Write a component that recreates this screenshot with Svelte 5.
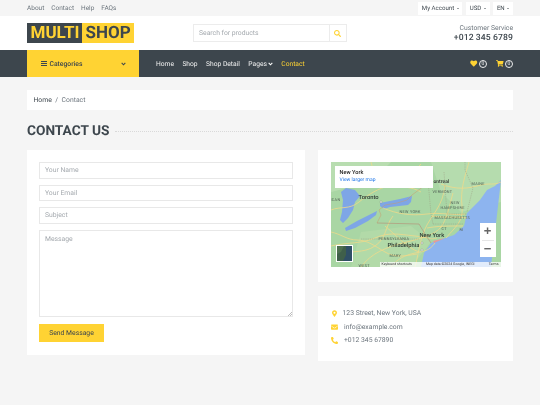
<script>
  const topLinks = ['About', 'Contact', 'Help', 'FAQs'];
  const dropdowns = ['My Account', 'USD', 'EN'];
  const navLinks = ['Home', 'Shop', 'Shop Detail'];
  const mapLabels = [
    { t: 'Toronto', x: 28, y: 33, c: 'big' },
    { t: 'New York', x: 89, y: 71, c: 'big' },
    { t: 'Philadelphia', x: 57, y: 81, c: 'big' },
    { t: 'ontreal', x: 103, y: 17, c: 'mid' },
    { t: 'ICAN', x: 0, y: 36, c: 'sm' },
    { t: 'NEW YORK', x: 69, y: 48, c: 'sm' },
    { t: 'VERMONT', x: 102, y: 28, c: 'sm' },
    { t: 'MAINE', x: 141, y: 20, c: 'sm' },
    { t: 'NEW', x: 120, y: 39, c: 'sm' },
    { t: 'HAMPSHIRE', x: 110, y: 43.500, c: 'sm' },
    { t: 'MASSACHUSETTS', x: 104, y: 54, c: 'sm' },
    { t: 'CT', x: 111, y: 65, c: 'sm' },
    { t: 'RI', x: 129, y: 66, c: 'sm' },
    { t: 'PENNSYLVANIA', x: 48, y: 75, c: 'sm' },
    { t: 'MARY', x: 59, y: 92, c: 'sm' },
    { t: 'WEST', x: 28, y: 102, c: 'sm' }
  ];
</script>

<div class="page">
  <div class="topbar">
    <div class="toplinks">
      {#each topLinks as l}<span>{l}</span>{/each}
    </div>
    <div class="drops">
      {#each dropdowns as d}<span class="drop">{d}<i class="caret"></i></span>{/each}
    </div>
  </div>

  <div class="header">
    <div class="logo"><span class="l1">MULTI</span><span class="l2">SHOP</span></div>
    <div class="search">
      <span class="ph">Search for products</span>
      <span class="sbtn">
        <svg width="7" height="7" viewBox="0 0 512 512"><path fill="#FFD333" d="M505 442.700 405.300 343c-4.500-4.500-10.600-7-17-7H372c27.600-35.300 44-79.700 44-128C416 93.100 322.900 0 208 0S0 93.100 0 208s93.100 208 208 208c48.300 0 92.700-16.400 128-44v16.300c0 6.400 2.500 12.500 7 17l99.700 99.700c9.400 9.400 24.600 9.400 33.900 0l28.300-28.300c9.400-9.400 9.400-24.600.1-34zM208 336c-70.700 0-128-57.200-128-128 0-70.700 57.200-128 128-128 70.700 0 128 57.200 128 128 0 70.700-57.200 128-128 128z"/></svg>
      </span>
    </div>
    <div class="service">
      <div class="cs">Customer Service</div>
      <div class="phone">+012 345 6789</div>
    </div>
  </div>

  <div class="nav">
    <div class="cat">
      <svg class="bars" width="6" height="5" viewBox="0 0 6 5"><path fill="#3D464D" d="M0 0h6v.9H0zM0 2.050h6v.9H0zM0 4.100h6V5H0z"/></svg>
      <span>Categories</span>
      <svg class="chev" width="5" height="4" viewBox="0 0 6 5"><path fill="none" stroke="#3D464D" stroke-width="1.400" d="M.7 1.200 3 3.500l2.300-2.300"/></svg>
    </div>
    <div class="links">
      {#each navLinks as l}<span>{l}</span>{/each}
      <span class="pages">Pages<svg width="5" height="4" viewBox="0 0 6 5"><path fill="none" stroke="#fff" stroke-width="1.400" d="M.7 1.200 3 3.500l2.300-2.300"/></svg></span>
      <span class="active">Contact</span>
    </div>
    <div class="icons">
      <span class="ic">
        <svg width="7.500" height="7" viewBox="0 0 512 512"><path fill="#FFD333" d="M462.300 62.600C407.500 15.900 326 24.300 275.700 76.200L256 96.500l-19.700-20.300C186.100 24.300 104.500 15.900 49.700 62.600c-62.800 53.600-66.100 149.800-9.900 207.900l193.500 199.800c12.500 12.900 32.800 12.900 45.300 0l193.500-199.800c56.300-58.100 53-154.300-9.800-207.900z"/></svg>
        <b>0</b>
      </span>
      <span class="ic">
        <svg width="7.500" height="7" viewBox="0 0 576 512"><path fill="#FFD333" d="M528.100 301.300l47.300-208C578.800 78.300 567.400 64 552 64H159.200l-9.200-44.800C147.800 8 137.900 0 126.500 0H24C10.700 0 0 10.700 0 24v16c0 13.300 10.700 24 24 24h69.900l70.200 343.400C147.300 417.100 136 435.200 136 456c0 30.900 25.100 56 56 56s56-25.100 56-56c0-15.700-6.400-29.800-16.800-40h209.600C430.400 426.200 424 440.300 424 456c0 30.900 25.100 56 56 56s56-25.100 56-56c0-22.200-12.900-41.300-31.600-50.400l5.500-24.300c3.400-15-8-29.300-23.400-29.300H218.100l-6.500-32h293.100c11.200 0 20.900-7.800 23.400-18.700z"/></svg>
        <b>0</b>
      </span>
    </div>
  </div>

  <main class="main">
    <div class="crumb"><span class="home">Home</span><span class="sep">/</span><span>Contact</span></div>

    <div class="title"><h2>CONTACT US</h2><span class="dots"></span></div>

    <div class="cols">
      <form class="card form">
        <div class="input">Your Name</div>
        <div class="input">Your Email</div>
        <div class="input">Subject</div>
        <div class="input area">Message
          <svg class="grip" width="4" height="4" viewBox="0 0 5 5"><path stroke="#888" stroke-width=".7" d="M0 5 5 0M2.500 5 5 2.500"/></svg>
        </div>
        <div class="send">Send Message</div>
      </form>

      <div class="side">
        <div class="card mapcard">
          <div class="map">
            <svg class="mapsvg" width="170" height="105" viewBox="0 0 170 105">
              <rect width="170" height="105" fill="#A9D6A4"/>
              <path d="M0 0h60L40 20 0 30z" fill="#B8DDB0"/>
              <path d="M100 0h70v40l-40 10-20-20z" fill="#B5DCAE"/>
              <path d="M30 70l50-6 20 16-20 25H20z" fill="#B2DAA8"/>
              <path d="M170 18l-6 6-8 4-7 10-13 13-3 13-10 9-23 8-7 10-3 14h70z" fill="#8DB4EF"/>
              <path d="M15 26l9 2 5 6-5 6-2 8-5 8-5 5-3-3 2-8 1-12-2-8z" fill="#7EA6E6"/>
              <path d="M14 66l12-7 10-5 10-5-1 4-8 6-13 7-9 3z" fill="#7EA6E6"/>
              <path d="M49 41l10-2 10-2 12-3-1 6-3 3-9 1-9 1-6 2-4-3z" fill="#7EA6E6"/>
              <g fill="none" stroke="#EFD98A" stroke-width=".8">
                <path d="M0 84c18-4 30-2 44-8s22-4 40-2 14 4 22 2"/>
                <path d="M0 70c10 2 16 8 26 8s18 6 28 12 20 4 32 2"/>
                <path d="M30 105c10-14 26-20 42-24s32-8 38-16 8-20 12-34"/>
                <path d="M52 46c14 6 28 8 44 6s26 2 38 0"/>
                <path d="M84 105c3-10 4-24 10-38s18-22 20-44"/>
                <path d="M138 0c-4 14-9 28-7 44s-8 22-16 32"/>
                <path d="M54 64c10 8 22 22 34 26"/>
                <path d="M8 92c12-4 24 0 36-8s10-20 18-30"/>
                <path d="M110 22c10 4 22 6 36 2s16 0 24-4"/>
                <path d="M100 54c12 2 24 0 36 2M96 66c10-2 22-2 36-2"/>
                <path d="M0 48c10-4 18 0 28-8s20-14 30-16 22-10 32-22"/>
                <path d="M60 105c6-8 14-12 24-14s14-2 20-10"/>
                <path d="M40 0c2 10 10 18 20 22s20 2 30 8"/>
              </g>
              <path d="M46 61l4-8-2-5 6-5 12-2 10-3 5-5 8-6 8-6" fill="none" stroke="#C99A6A" stroke-width=".5"/>
              <path d="M46 61l42 1 6 10 6 9" fill="none" stroke="#B87C6A" stroke-width=".5"/>
              <path d="M30 77h58M96 8l4 44 2 10M102 62h30M113 10l3 42M116 52h20M134 0v8l8 18-6 24" fill="none" stroke="#98907A" stroke-width=".4" stroke-dasharray="1.300 .9"/>
              <path d="M102 79l12-3 8-4-10 5-9 4z" fill="#E59A9A"/>
              <circle cx="50" cy="40" r="1" fill="#fff" stroke="#777" stroke-width=".4"/>
              <circle cx="91" cy="81" r="1" fill="#fff" stroke="#777" stroke-width=".4"/>
              <circle cx="91" cy="88" r="1" fill="#fff" stroke="#777" stroke-width=".4"/>
            </svg>
            {#each mapLabels as l}
              <span class="lbl {l.c}" style="left:{l.x}px;top:{l.y}px">{l.t}</span>
            {/each}

            <div class="info">
              <div class="ny">New York</div>
              <div class="vl">View larger map</div>
            </div>
            <div class="zoom"><span class="plus">+</span><i></i><span class="minus">−</span></div>
            <div class="thumb">
              <svg width="15" height="15" viewBox="0 0 15 15"><rect width="15" height="15" fill="#3F5F4A"/><path d="M9 0h6v15H6l3-6z" fill="#2F4F66"/><path d="M0 0h7L4 6 0 8z" fill="#4E7050"/></svg>
            </div>
            <div class="attr"><span>Keyboard shortcuts</span><span>Map data ©2024 Google, INEGI</span><span>Terms</span></div>
          </div>
        </div>

        <div class="card infocard">
          <div class="row">
            <svg class="pin" viewBox="0 0 384 512"><path fill="#FFD333" d="M172.300 501.700C27 291 0 256 0 192 0 86 86 0 192 0s192 86 192 192c0 64-27 99-172.300 309.700-9.500 13.800-29.900 13.800-39.400 0zM192 272a80 80 0 1 0 0-160 80 80 0 0 0 0 160z"/></svg>
            <span class="t1">123 Street, New York, USA</span>
          </div>
          <div class="row">
            <svg class="env" viewBox="0 0 512 384"><path fill="#FFD333" d="M502.300 126.800c3.900-3.100 9.700-.2 9.700 4.700V336c0 26.500-21.500 48-48 48H48c-26.500 0-48-21.500-48-48V131.600c0-5 5.700-7.800 9.700-4.700 22.400 17.400 52.100 39.500 154.100 113.600 21.100 15.400 56.700 47.800 92.200 47.600 35.700.3 72-32.800 92.300-47.600 102-74.100 131.600-96.300 154-113.700zM256 256c23.200.4 56.600-29.200 73.400-41.400 132.700-96.300 142.800-104.700 173.400-128.700 5.800-4.500 9.200-11.500 9.200-18.900V48c0-26.500-21.500-48-48-48H48C21.500 0 0 21.500 0 48v19c0 7.400 3.400 14.300 9.200 18.900 30.600 23.900 40.700 32.400 173.400 128.700 16.800 12.200 50.200 41.800 73.400 41.400z"/></svg>
            <span class="t2">info@example.com</span>
          </div>
          <div class="row">
            <svg class="ph-ic" viewBox="0 0 512 512"><path fill="#FFD333" d="M493.400 24.600l-104-24c-11.300-2.600-22.900 3.300-27.500 13.900l-48 112c-4.200 9.800-1.400 21.300 6.900 28l60.600 49.600c-36 76.700-98.900 140.500-177.200 177.200l-49.600-60.600c-6.800-8.300-18.200-11.100-28-6.900l-112 48C3.900 366.500-2 378.100.6 389.400l24 104C27.100 504.200 36.700 512 48 512c256.100 0 464-207.500 464-464 0-11.200-7.700-20.900-18.600-23.400z" transform="matrix(-1 0 0 1 512 0)"/></svg>
            <span class="t2">+012 345 67890</span>
          </div>
        </div>
      </div>
    </div>
  </main>
</div>

<style>
  :global(body) { margin: 0; background: #f5f5f5; }
  .page { width: 540px; height: 405px; overflow: hidden; background: #f5f5f5; font-family: Roboto, sans-serif; font-size: 6.800px; color: #6c757d; text-rendering: geometricPrecision; filter: blur(.25px); }

  .topbar { height: 16px; padding: 0 27px; display: flex; justify-content: space-between; align-items: center; }
  .toplinks { display: flex; gap: 7px; color: #6c757d; font-size: 6.500px; }
  .drops { display: flex; gap: 3.500px; }
  .drop { background: #fff; height: 13px; padding: 0 3.800px; display: flex; align-items: center; gap: 1.500px; color: #3d464d; font-size: 6.100px; }
  .caret { width: 0; height: 0; border: 1.500px solid transparent; border-top-color: #3d464d; border-bottom: 0; margin-left: 1px; }

  .header { height: 34px; background: #fff; padding: 0 27px; display: grid; grid-template-columns: 166px 1fr auto; align-items: center; }
  .logo { display: flex; height: 20px; width: 107px; font-size: 17px; line-height: 20px; font-weight: 700; }
  .l1 { background: #3d464d; color: #ffd333; padding-left: 3.500px; width: 55px; box-sizing: border-box; }
  .l2 { background: #ffd333; color: #3d464d; padding-left: 3.500px; width: 52px; box-sizing: border-box; }
  .search { width: 154px; height: 17.500px; box-sizing: border-box; border: 1px solid #ececec; display: flex; align-items: center; justify-content: space-between; }
  .ph { padding-left: 5px; color: #a4a9ae; }
  .sbtn { width: 16.500px; height: 100%; display: flex; align-items: center; justify-content: center; border-left: 1px solid #ececec; }
  .service { text-align: right; }
  .cs { font-size: 6.800px; color: #6c757d; line-height: 10px; }
  .phone { font-size: 8.600px; font-weight: 500; color: #3d464d; line-height: 10px; letter-spacing: .1px; }

  .nav { height: 27px; background: #3d464d; padding: 0 27px; display: flex; align-items: stretch; }
  .cat { width: 112px; box-sizing: border-box; background: #ffd333; padding: 0 13.500px; display: flex; align-items: center; color: #3d464d; font-weight: 500; }
  .cat span { flex: 1; margin-left: 3px; }
  .links { display: flex; align-items: center; gap: 8.400px; margin-left: 17px; flex: 1; font-size: 6.700px; }
  .links span { color: #f2f2f2; }
  .links .active { color: #ffd333; }
  .pages { display: flex; align-items: center; gap: 1px; }
  .icons { display: flex; align-items: center; gap: 9px; }
  .ic { display: flex; align-items: center; gap: 1.500px; }
  .ic b { width: 8px; height: 8px; border-radius: 50%; border: .5px solid #eee; box-sizing: border-box; color: #eee; font-weight: 400; font-size: 5px; display: flex; align-items: center; justify-content: center; }

  .main { padding: 13px 27px 0; }
  .crumb { height: 20px; background: #fff; padding: 0 6.500px; display: flex; align-items: center; gap: 3.500px; color: #6c757d; }
  .crumb .home { color: #3d464d; }
  .title { display: flex; align-items: center; gap: 6px; margin-top: 7px; height: 32.500px; padding-bottom: 4px; box-sizing: border-box; }
  h2 { margin: 0; font-size: 13.700px; font-weight: 700; color: #3d464d; white-space: nowrap; }
  .dots { flex: 1; border-top: 1px dotted #d9d9d9; }

  .cols { display: flex; gap: 13px; align-items: flex-start; }
  .card { background: #fff; box-sizing: border-box; }
  .form { width: 278px; height: 205px; padding: 12.500px 12px 0; display: flex; flex-direction: column; align-items: flex-start; }
  .input { width: 100%; box-sizing: border-box; height: 16.500px; margin-bottom: 6px; border: 1px solid #e8e8e8; padding: 0 5px; line-height: 14.500px; color: #a4a9ae; }
  .area { height: 87px; position: relative; padding-top: 1px; margin-bottom: 7px; }
  .grip { position: absolute; right: 0; bottom: 0; }
  .send { width: 65px; height: 18px; background: #ffd333; color: #3d464d; display: flex; align-items: center; justify-content: center; }

  .side { flex: 1; display: flex; flex-direction: column; gap: 14px; }
  .mapcard { height: 132px; padding: 12.500px 12.500px; }
  .map { position: relative; width: 170px; height: 105px; overflow: hidden; }
  .mapsvg { display: block; }
  .lbl { position: absolute; white-space: nowrap; font-family: Roboto, sans-serif; }
  .big { font-size: 5.800px; line-height: 6px; color: #2e3a33; font-weight: 500; }
  .mid { font-size: 5px; line-height: 6px; color: #333; font-weight: 500; }
  .sm { font-size: 3.800px; letter-spacing: .3px; line-height: 4px; color: #4e5c52; }
  .info { position: absolute; left: 4px; top: 4px; width: 98px; height: 22px; background: #fff; padding: 4px 5px; box-sizing: border-box; }
  .ny { font-size: 5.600px; font-weight: 500; color: #222; line-height: 7px; }
  .vl { font-size: 5px; color: #1a73e8; line-height: 7px; }
  .zoom { position: absolute; left: 149px; top: 61px; width: 16px; height: 34px; background: #fff; display: flex; flex-direction: column; align-items: center; color: #666; }
  .plus, .minus { height: 16.500px; line-height: 16.500px; font-size: 13px; font-weight: 700; font-family: "Liberation Sans", sans-serif; }
  .zoom i { width: 12px; height: 1px; background: #e6e6e6; flex: none; }
  .thumb { position: absolute; left: 5px; top: 83px; width: 17px; height: 17px; border: 1px solid #fff; box-sizing: border-box; }
  .thumb svg { display: block; }
  .attr { position: absolute; right: 0; bottom: 0; left: 49px; display: flex; justify-content: space-between; background: rgba(255,255,255,.75); font-size: 3.500px; line-height: 5px; color: #333; padding: 0 2px; white-space: nowrap; }

  .infocard { height: 65px; padding: 14px 13px; display: flex; flex-direction: column; gap: 6.500px; }
  .row { display: flex; align-items: center; height: 7px; color: #6c757d; }
  .pin { width: 5px; height: 7px; flex: none; margin: 0 1px; }
  .env { width: 7px; height: 6px; flex: none; }
  .ph-ic { width: 7px; height: 7px; flex: none; }
  .t1 { margin-left: 4.500px; }
  .t2 { margin-left: 6px; }
</style>
